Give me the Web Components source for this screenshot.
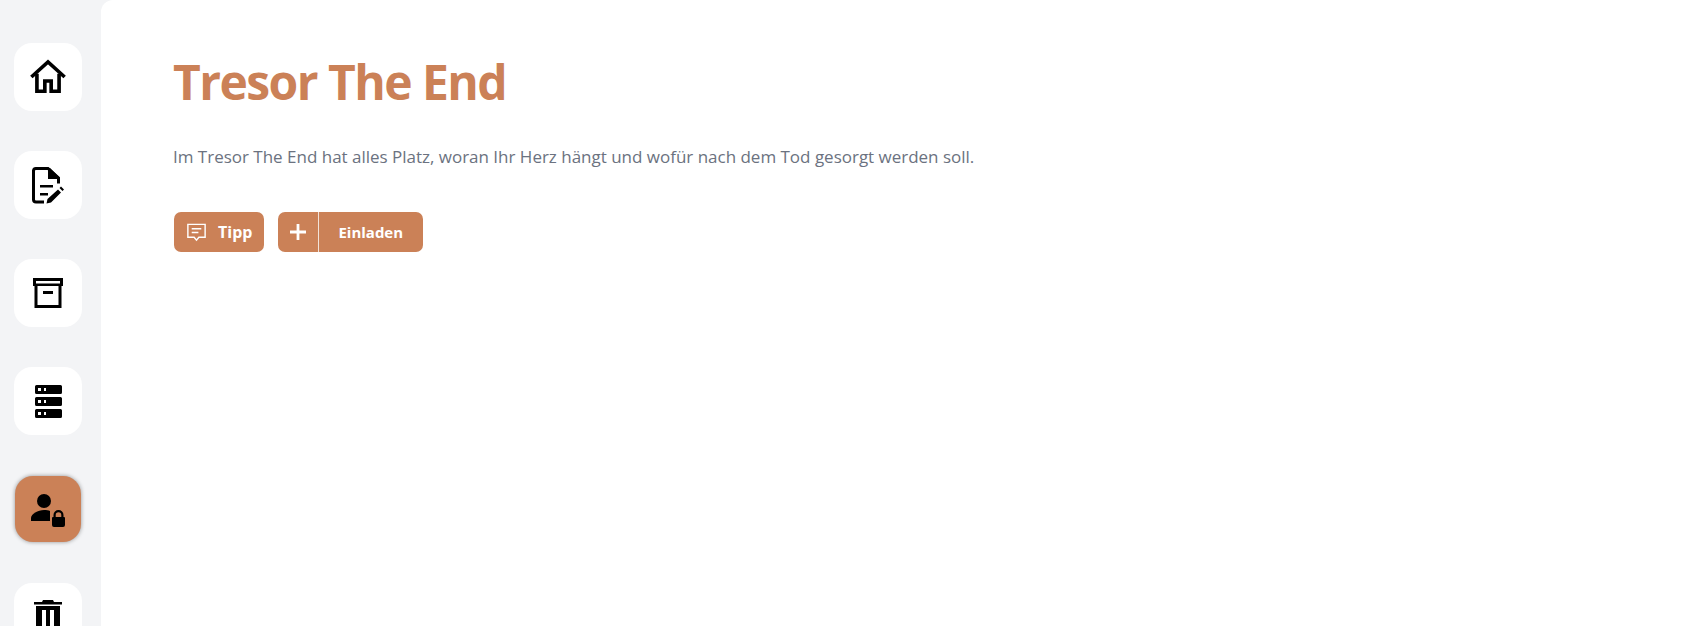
<!DOCTYPE html>
<html lang="de">
<head>
<meta charset="utf-8">
<title>Tresor The End</title>
<style>
  html, body { margin: 0; height: 100%; overflow: hidden; background: #f3f4f6; }
  body { font-family: "Open Sans", "Noto Sans", sans-serif; }
</style>
</head>
<body>
<app-shell>
  <side-nav slot="nav">
    <nav-item>
      <svg viewBox="0 0 24 24" width="38" height="38" fill="none" stroke="#000" stroke-width="2.300"><path d="M1.500 12 12 2.500 22.500 12"/><path d="M5 10v11h5v-6.500h4V21h5V10"/></svg>
    </nav-item>
    <nav-item>
      <svg viewBox="0 0 32 37" width="32" height="37">
        <path d="M12 35H4a2.500 2.500 0 0 1-2.500-2.500v-29A2.500 2.500 0 0 1 4 1.500h12L26.500 11v5.500" fill="none" stroke="#000" stroke-width="3"/>
        <path d="M16 1h2l9 9v2H16z"/>
        <path d="M8 18h13v2.600H8zM8 26h8v2.600H8z"/>
        <path d="m14.500 36.500 1-4.500 10.500-9.500 3 3-10 10zM27.500 21l1.500-1.500 3 3-1.500 1.500z"/>
      </svg>
    </nav-item>
    <nav-item>
      <svg viewBox="0 0 30 30" width="30" height="30"><path fill-rule="evenodd" d="M0 0h30v8h-1.500v22h-27V8H0Zm3 3v2.500h24V3ZM4.500 8v19h21V8Z"/><path d="M10 13h10v3H10z"/></svg>
    </nav-item>
    <nav-item>
      <svg viewBox="0 0 27 33" width="27" height="33"><path fill-rule="evenodd" d="M1.500 0h24A1.500 1.500 0 0 1 27 1.500v6A1.500 1.500 0 0 1 25.500 9h-24A1.500 1.500 0 0 1 0 7.500v-6A1.500 1.500 0 0 1 1.500 0ZM3 3v3h3V3Zm6 0v3h2V3ZM1.500 12h24a1.500 1.500 0 0 1 1.500 1.500v6a1.500 1.500 0 0 1-1.500 1.500h-24A1.500 1.500 0 0 1 0 19.500v-6A1.500 1.500 0 0 1 1.500 12ZM3 15v3h3v-3Zm6 0v3h2v-3ZM1.500 24h24a1.500 1.500 0 0 1 1.500 1.500v6a1.500 1.500 0 0 1-1.500 1.500h-24A1.500 1.500 0 0 1 0 31.500v-6A1.500 1.500 0 0 1 1.500 24ZM3 27v3h3v-3Zm6 0v3h2v-3Z"/></svg>
    </nav-item>
    <nav-item active>
      <svg viewBox="0 0 34 33" width="34" height="33" style="margin-top: 3px"><circle cx="13" cy="7" r="7"/><path d="M0 27v-3c0-4 7-8 13-8 2.500 0 4.500.3 6 1v10Z"/><path fill-rule="evenodd" d="M22.500 23v-2a5 5 0 0 1 10 0v2h.500a1 1 0 0 1 1 1v7a2 2 0 0 1-2 2h-9a2 2 0 0 1-2-2v-7a1 1 0 0 1 1-1Zm2.200 0h5.600v-2a2.800 2.800 0 0 0-5.600 0Z"/></svg>
    </nav-item>
    <nav-item>
      <svg viewBox="0 0 28 34" width="28" height="34"><path fill-rule="evenodd" d="M9 0h10l1 2h8v2.500H0V2h8ZM2 6h24v26a2 2 0 0 1-2 2H4a2 2 0 0 1-2-2Zm6 4v20h4V10Zm8 0v20h4V10Z"/></svg>
    </nav-item>
  </side-nav>
  <page-header>
    <span slot="title">Tresor The End</span>
    <span slot="lead">Im Tresor The End hat alles Platz, woran Ihr Herz hängt und wofür nach dem Tod gesorgt werden soll.</span>
    <action-button slot="actions">
      <svg slot="icon" viewBox="0 0 24 24" width="23" height="23" fill="none" stroke="#fff" stroke-width="1.500"><path d="M3 3.500h18v13.500h-6.500L12 20l-2.500-3H3Z"/><path d="M7 8h10M7 12h7"/></svg>
      Tipp
    </action-button>
    <split-button slot="actions">Einladen</split-button>
  </page-header>
</app-shell>
<script>
// tiny helper so every element sets up its shadow root the same way
function shadow(el, html) {
  el.attachShadow({ mode: 'open' }).innerHTML = html;
}

class AppShell extends HTMLElement {
  constructor() {
    super();
    shadow(this, `
      <style>
        :host { display: flex; height: 100vh; background: #f3f4f6; }
        .main { flex: 1; background: #fff; border-top-left-radius: 12px; overflow: hidden; }
      </style>
      <slot name="nav"></slot>
      <div class="main"><slot></slot></div>
    `);
  }
}
customElements.define('app-shell', AppShell);

class SideNav extends HTMLElement {
  constructor() {
    super();
    shadow(this, `
      <style>
        :host { display: flex; flex-direction: column; gap: 40px; width: 101px; height: 100vh; box-sizing: border-box; padding: 43px 0 0 14px; overflow: hidden; }
      </style>
      <slot></slot>
    `);
  }
}
customElements.define('side-nav', SideNav);

class NavItem extends HTMLElement {
  constructor() {
    super();
    shadow(this, `
      <style>
        :host { display: flex; flex: none; align-items: center; justify-content: center; width: 68px; height: 68px; border-radius: 18px; background: #fff; }
        :host([active]) { width: 66px; height: 66px; margin: 1px; background: #cb8157; box-shadow: 0 0 4px rgba(0, 0, 0, .4); }
      </style>
      <slot></slot>
    `);
  }
}
customElements.define('nav-item', NavItem);

class PageHeader extends HTMLElement {
  constructor() {
    super();
    shadow(this, `
      <style>
        :host { display: block; padding: 48px 0 0 72px; }
        h1 { margin: 0; font-size: 48px; line-height: 68px; font-weight: 700; letter-spacing: -1.550px; color: #cb8157; }
        p { margin: 29px 0 0; font-size: 17px; line-height: 24px; letter-spacing: -.01px; color: #6b7280; }
        .actions { display: flex; gap: 14px; margin-top: 43px; margin-left: 1px; }
      </style>
      <h1><slot name="title"></slot></h1>
      <p><slot name="lead"></slot></p>
      <div class="actions"><slot name="actions"></slot></div>
    `);
  }
}
customElements.define('page-header', PageHeader);

class ActionButton extends HTMLElement {
  constructor() {
    super();
    shadow(this, `
      <style>
        :host { display: inline-flex; align-items: center; gap: 10px; height: 40px; box-sizing: border-box; padding: 0 12px 0 11px; border-radius: 7px; background: #cb8157; color: #fff; font-size: 16px; font-weight: 700; }
      </style>
      <slot name="icon"></slot><slot></slot>
    `);
  }
}
customElements.define('action-button', ActionButton);

class SplitButton extends HTMLElement {
  constructor() {
    super();
    shadow(this, `
      <style>
        :host { display: inline-flex; align-items: stretch; height: 40px; border-radius: 7px; background: #cb8157; color: #fff; font-size: 15px; font-weight: 700; overflow: hidden; }
        .plus { display: flex; align-items: center; justify-content: center; width: 40px; border-right: 1px solid #f3e3d9; }
        .label { display: flex; align-items: center; padding: 0 20px 0 19px; }
      </style>
      <span class="plus"><svg viewBox="0 0 16 16" width="16" height="16" stroke="#fff" stroke-width="2.800"><path d="M8 0v16M0 8h16"/></svg></span>
      <span class="label"><slot></slot></span>
    `);
  }
}
customElements.define('split-button', SplitButton);
</script>
</body>
</html>
